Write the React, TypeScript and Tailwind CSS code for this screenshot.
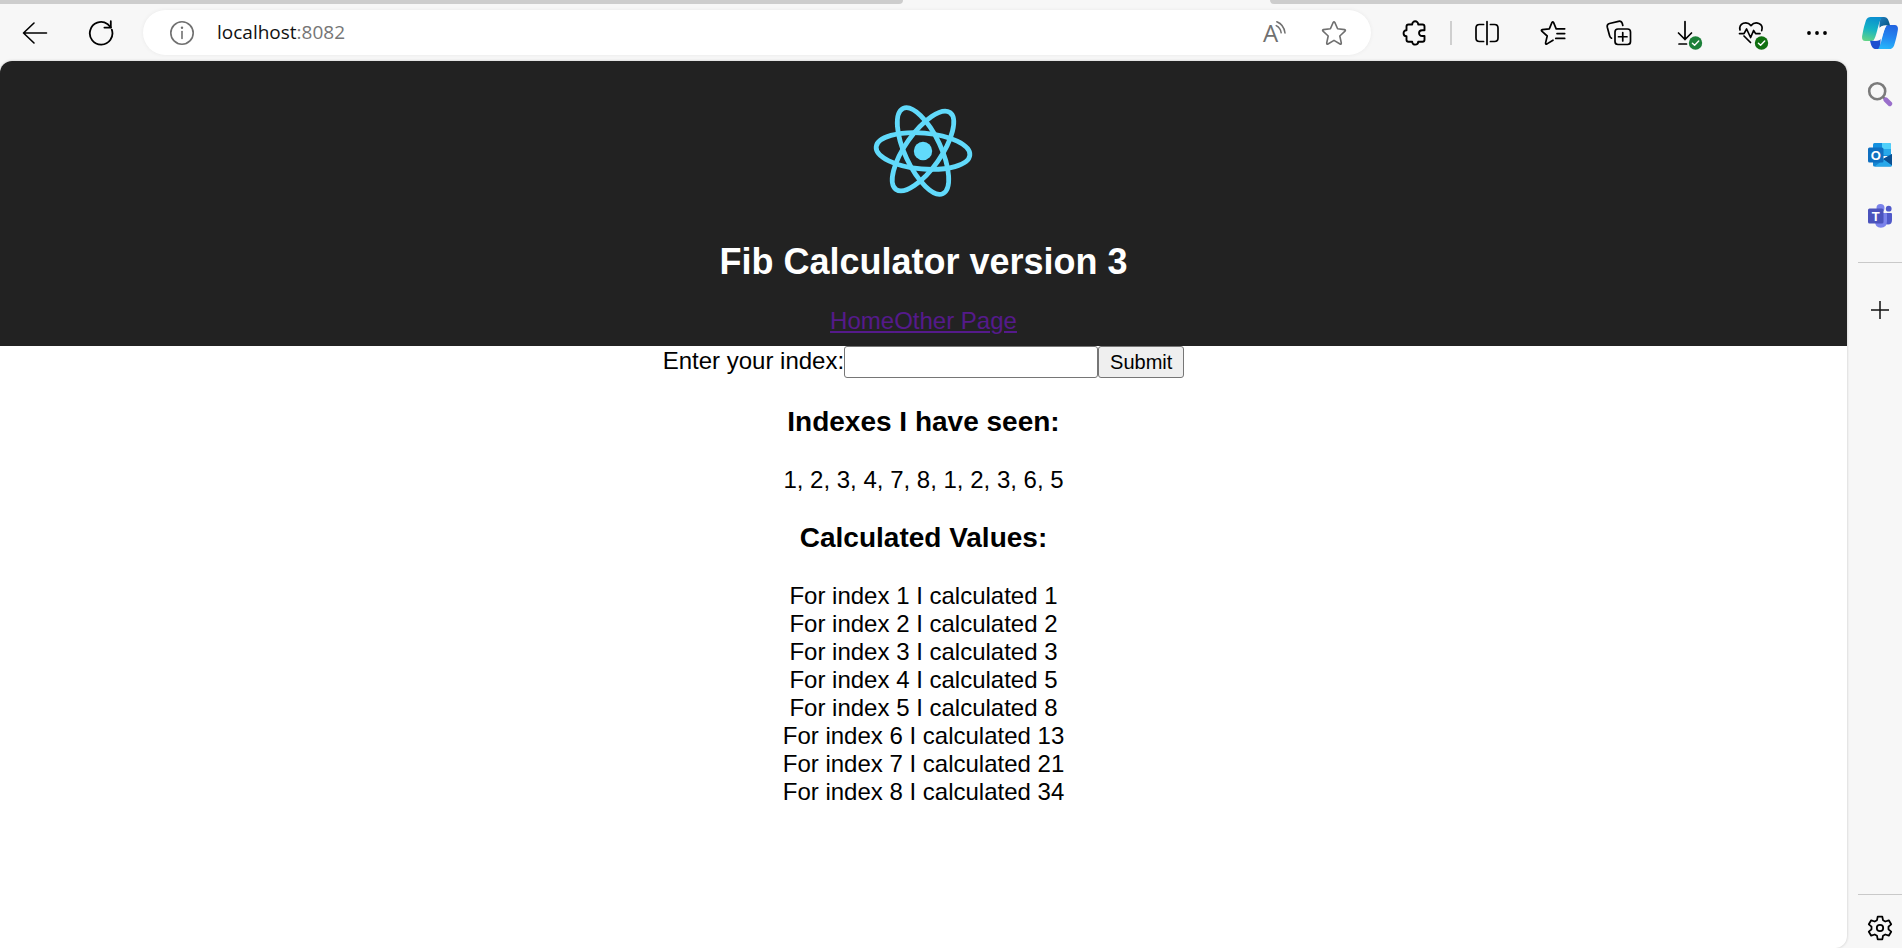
import { useState, type FormEvent, type ReactNode } from 'react';

const strokeProps = {
  fill: 'none',
  stroke: 'currentColor',
  strokeWidth: 1.6,
  strokeLinecap: 'round' as const,
  strokeLinejoin: 'round' as const,
};

function ToolButton({ label, children }: { label: string; children: ReactNode }) {
  return (
    <button type="button" aria-label={label} className="flex h-[57px] w-[66px] shrink-0 items-center justify-center text-black">
      {children}
    </button>
  );
}

function BackIcon() {
  return (
    <svg width="26" height="26" viewBox="0 0 26 26" {...strokeProps}>
      <path d="M1.5 13H24.5M12 3 1.5 13 12 23" />
    </svg>
  );
}

function ReloadIcon() {
  return (
    <svg width="26" height="26" viewBox="0 0 26 26" {...strokeProps} strokeWidth={1.8}>
      <path d="M23.8 9.6A11.3 11.3 0 1 1 19.4 3.9L22.8 7.4" />
      <path d="M22.8 1.2V7.6H16.4" />
    </svg>
  );
}

function InfoIcon() {
  return (
    <svg width="26" height="26" viewBox="0 0 26 26" {...strokeProps}>
      <circle cx="13" cy="13" r="11.2" />
      <path d="M13 11.5V18.5" />
      <circle cx="13" cy="7.8" r="1.2" fill="currentColor" stroke="none" />
    </svg>
  );
}

function ReadAloudIcon() {
  return (
    <svg width="26" height="26" viewBox="0 0 26 26" overflow="visible" {...strokeProps} strokeWidth={1.5}>
      <text x="2" y="22" fill="currentColor" stroke="none" className="font-['Open_Sans',sans-serif] text-[24px] leading-6">A</text>
      <path d="M15.200 5.600C18 7 19.800 9.600 20.200 12.800" />
      <path d="M15.800 1.800C20.400 3.600 23.400 7.800 24 13" />
    </svg>
  );
}

function StarIcon() {
  return (
    <svg width="26" height="26" viewBox="0 0 26 26" {...strokeProps}>
      <path d="M12.200 2.400Q13 1.200 13.800 2.400L16.600 8.800 23.600 9.600Q25 10 24 11.200L18.800 16 20.300 23Q20.400 24.600 19 24L13 20.400 7 24Q5.600 24.600 5.700 23L7.200 16 2 11.200Q1 10 2.400 9.600L9.400 8.800Z" />
    </svg>
  );
}

function PuzzleIcon() {
  return (
    <svg width="26" height="26" viewBox="0 0 26 26" {...strokeProps} strokeWidth={1.9}>
      <path d="M6.500 4.500H10.200C10.200 0.200 16.200 0.200 16.200 4.500H20.500Q22.500 4.500 22.500 6.500V10.200H20.200C16 10.200 16 16 20.200 16H22.500V19.800Q22.500 21.800 20.500 21.800H16.200C16.200 25.600 10.200 25.600 10.200 21.800H6.500Q4.500 21.800 4.500 19.800V16.200C0.600 16.200 0.600 10.200 4.500 10.200V6.500Q4.500 4.500 6.500 4.500Z" />
    </svg>
  );
}

function SplitIcon() {
  return (
    <svg width="26" height="26" viewBox="0 0 26 26" {...strokeProps} strokeWidth={1.700}>
      <path d="M13 1.500V24.500M9.600 4.500H5.500Q2 4.500 2 8V18Q2 21.500 5.500 21.500H9.600M16.400 4.500H20.500Q24 4.500 24 8V18Q24 21.500 20.500 21.500H16.400" />
    </svg>
  );
}

function FavoritesIcon() {
  return (
    <svg width="26" height="26" viewBox="0 0 26 26" {...strokeProps} strokeWidth={1.700}>
      <path d="M13 20.200 7 23.900Q5.400 24.600 5.600 22.900L7.200 16 1.800 11.200Q0.800 9.900 2.300 9.600L9.300 8.800 12 2.400Q12.800 1.200 13.500 2.400L16.200 8.800H24.700M17 13.600H24.700M15.800 18.400H24.700" />
    </svg>
  );
}

function CollectionsIcon() {
  return (
    <svg width="26" height="26" viewBox="0 0 26 26" {...strokeProps} strokeWidth={1.700}>
      <rect x="9" y="9" width="15.500" height="15.500" rx="3" />
      <path d="M16.750 12.500V21M12.500 16.750H21" />
      <path d="M5.500 18.200C4.300 17.700 3.900 16.900 3.600 15.800L1.300 7.200C.9 5.300 1.600 4 3.500 3.500L12.500 1.300C14.500 .9 15.700 1.600 16.300 3.500L16.800 5.500" />
    </svg>
  );
}

function StatusBadge({ fill }: { fill: string }) {
  return (
    <g stroke="none">
      <circle cx="23.500" cy="23" r="6.700" fill={fill} />
      <path d="M20.400 23.200 22.600 25.300 26.700 21" fill="none" stroke="#fff" strokeWidth="1.400" />
    </g>
  );
}

function DownloadIcon() {
  return (
    <svg width="26" height="26" viewBox="0 0 26 26" overflow="visible" {...strokeProps} strokeWidth={1.700}>
      <path d="M13 1.500V19.500M6.500 13 13 19.500 19.500 13M7 24H14.500" />
      <StatusBadge fill="#1c8039" />
    </svg>
  );
}

function HealthIcon() {
  return (
    <svg width="26" height="26" viewBox="0 0 26 26" overflow="visible" {...strokeProps} strokeWidth={1.700}>
      <path d="M2 10C.6 3.500 8.500.2 13 5.600 17.500.2 26 3.500 23.700 10.600M6 16 12.500 22.500M1.500 13.600H6L8.600 9 12.600 17.500 15.600 10.500 17.600 13.600H22" />
      <StatusBadge fill="#107010" />
    </svg>
  );
}

function MoreIcon() {
  return (
    <svg width="26" height="26" viewBox="0 0 26 26" fill="currentColor">
      <circle cx="5" cy="13" r="1.900" />
      <circle cx="13" cy="13" r="1.900" />
      <circle cx="21" cy="13" r="1.900" />
    </svg>
  );
}

function CopilotIcon() {
  return (
    <svg width="36" height="32" viewBox="0 0 108 96">
      <defs>
        <linearGradient id="copilot-left" x1="0.500" y1="0" x2="0.300" y2="1">
          <stop offset="0" stopColor="#0a8fd0" />
          <stop offset="0.500" stopColor="#14b3c4" />
          <stop offset="1" stopColor="#62d488" />
        </linearGradient>
        <linearGradient id="copilot-right" x1="0.700" y1="0" x2="0.500" y2="1">
          <stop offset="0" stopColor="#2364e0" />
          <stop offset="0.500" stopColor="#2385f0" />
          <stop offset="1" stopColor="#27b5fa" />
        </linearGradient>
        <linearGradient id="copilot-fold" x1="0" y1="0" x2="1" y2="1">
          <stop offset="0" stopColor="#1e7fc0" />
          <stop offset="1" stopColor="#064d78" />
        </linearGradient>
      </defs>
      <path d="M82 96H40C50 96 54 86 58 72 64 50 66 40 71 30 73 25 77 24 82 24H98C108 24 109 34 107 42 104 60 100 74 96 86 93 93 88 96 82 96Z" fill="url(#copilot-right)" />
      <path d="M26 0H68C58 0 54 10 50 24 44 46 42 56 37 66 35 71 31 72 26 72H10C0 72-1 62 1 54 4 36 8 22 12 10 15 3 20 0 26 0Z" fill="url(#copilot-left)" />
      <path d="M60 0H66C76 0 80 8 84 25H70C62 25 58 28 54 36 50 24 54 4 60 0Z" fill="url(#copilot-fold)" />
      <path d="M48 96H42C32 96 28 88 24 71H38C46 71 50 68 54 60 58 72 54 92 48 96Z" fill="#1c4fd0" />
      <path d="M63 27H73C69 30 67 40 63 50 59 63 56 70 46 71H35C41 66 44 56 48 44 51 34 54 27 63 27Z" fill="#fafafa" />
    </svg>
  );
}

function SearchIcon() {
  return (
    <svg width="26" height="26" viewBox="0 0 26 26" fill="none">
      <circle cx="10.200" cy="10.200" r="8" stroke="#7b7b7b" strokeWidth="2.600" />
      <path d="M16 16 19 19" stroke="#777" strokeWidth="2.400" />
      <path d="M18.800 18.800 22.800 22.800" stroke="#9a6fcb" strokeWidth="4.800" strokeLinecap="round" />
    </svg>
  );
}

function OutlookIcon() {
  return (
    <svg width="26" height="26" viewBox="0 0 26 26">
      <rect x="6" y="1" width="18" height="13" rx="1.500" fill="#1490df" />
      <path d="M15 1H22.500Q24 1 24 2.500V7H15Z" fill="#50d0fa" />
      <path d="M15 7H24V13H15Z" fill="#28a8ea" />
      <path d="M6 12 16 17 25 12V23Q25 24.500 23.500 24.500H7.500Q6 24.500 6 23Z" fill="#1585d2" />
      <path d="M25 12V23.500L16 17Z" fill="#0a4f91" />
      <path d="M16 17 25 23.500Q24.500 24.500 23.500 24.500H7.500L15 19Z" fill="#28a8ea" />
      <rect x="1" y="5.500" width="15.500" height="15" rx="1.500" fill="#0f6fc0" />
      <text x="8.750" y="17.500" textAnchor="middle" fill="#fff" className="font-['Liberation_Sans',sans-serif] text-[13px] font-bold">O</text>
    </svg>
  );
}

function TeamsIcon() {
  return (
    <svg width="26" height="26" viewBox="0 0 26 26">
      <circle cx="21.700" cy="5.700" r="2.900" fill="#5059c9" />
      <path d="M16 10H24Q25 10 25 11V17Q25 21.500 21 21.500 16 21.500 16 17Z" fill="#5059c9" />
      <circle cx="13.500" cy="5" r="4" fill="#7b83eb" />
      <path d="M8 10H19Q20 10 20 11V18Q20 24.800 13.800 24.800 8 24.800 8 18Z" fill="#7b83eb" />
      <rect x="1" y="5.500" width="15.500" height="15" rx="1.500" fill="#4b53bc" />
      <text x="8.750" y="17.500" textAnchor="middle" fill="#fff" className="font-['Liberation_Sans',sans-serif] text-[13px] font-bold">T</text>
    </svg>
  );
}

function PlusIcon() {
  return (
    <svg width="20" height="20" viewBox="0 0 20 20" stroke="#111" strokeWidth="1.500">
      <path d="M10 1V19M1 10H19" />
    </svg>
  );
}

function GearIcon() {
  return (
    <svg width="26" height="26" viewBox="0 0 26 26" {...strokeProps} strokeWidth={1.800}>
      <circle cx="13" cy="13" r="3.200" />
      <path d="M10.700 1.600H15.300L16 5.200 18.300 6.500 21.800 5.300 24.200 9.300 21.500 11.700V14.300L24.200 16.700 21.800 20.700 18.300 19.500 16 20.800 15.300 24.400H10.700L10 20.800 7.700 19.500 4.200 20.700 1.800 16.700 4.500 14.300V11.700L1.800 9.300 4.200 5.300 7.700 6.500 10 5.200Z" />
    </svg>
  );
}

function ReactLogo() {
  return (
    <svg viewBox="-59 -60 120 120" className="h-[120px] w-[120px]" role="img" aria-label="logo">
      <circle r="9.200" fill="#61dafb" />
      <g fill="none" stroke="#61dafb" strokeWidth="4.800" transform="rotate(5)">
        <ellipse rx="47" ry="18" />
        <ellipse rx="47" ry="18" transform="rotate(60)" />
        <ellipse rx="47" ry="18" transform="rotate(120)" />
      </g>
    </svg>
  );
}

function TabStrip() {
  return (
    <div className="flex h-1">
      <div className="flex-[903] rounded-br-sm bg-[#cdcdcd]" />
      <div className="flex-[367]" />
      <div className="flex-[632] rounded-bl-sm bg-[#cdcdcd]" />
    </div>
  );
}

function Toolbar() {
  return (
    <div className="flex h-[57px] items-center pl-0.5">
      <ToolButton label="Back"><BackIcon /></ToolButton>
      <ToolButton label="Refresh"><ReloadIcon /></ToolButton>
      <div className="mr-[11px] ml-[9px] flex h-[45px] flex-1 items-center rounded-full bg-white pl-[26px] text-[#707070] shadow-[0_0_4px_rgba(0,0,0,0.06)]">
        <InfoIcon />
        <p className="ml-[22px] flex-1 pb-0.5 font-['Open_Sans',sans-serif] text-[19px] leading-7 text-[#767676]">
          <span className="text-[#111]">localhost</span>:8082
        </p>
        <div className="flex items-center gap-[34px] pr-6">
          <button type="button" aria-label="Read aloud"><ReadAloudIcon /></button>
          <button type="button" aria-label="Add to favorites"><StarIcon /></button>
        </div>
      </div>
      <ToolButton label="Extensions"><PuzzleIcon /></ToolButton>
      <div className="mx-0.5 h-6 w-0.5 bg-[#cfcfcf]" />
      <ToolButton label="Split screen"><SplitIcon /></ToolButton>
      <ToolButton label="Favorites"><FavoritesIcon /></ToolButton>
      <ToolButton label="Collections"><CollectionsIcon /></ToolButton>
      <ToolButton label="Downloads"><DownloadIcon /></ToolButton>
      <ToolButton label="Browser essentials"><HealthIcon /></ToolButton>
      <ToolButton label="Settings and more"><MoreIcon /></ToolButton>
      <button type="button" aria-label="Copilot" className="ml-2 flex w-11 shrink-0 justify-center"><CopilotIcon /></button>
    </div>
  );
}

function SideButton({ label, children }: { label: string; children: ReactNode }) {
  return (
    <button type="button" aria-label={label} className="flex h-[61px] w-full shrink-0 items-center justify-center">
      {children}
    </button>
  );
}

function Sidebar() {
  return (
    <aside className="flex w-[55px] shrink-0 flex-col pt-0.5 pl-[11px]">
      <SideButton label="Search"><SearchIcon /></SideButton>
      <SideButton label="Outlook"><OutlookIcon /></SideButton>
      <SideButton label="Teams"><TeamsIcon /></SideButton>
      <hr className="my-4 border-[#c9c9c9]" />
      <SideButton label="Customize"><PlusIcon /></SideButton>
      <div className="mt-auto flex flex-col items-center">
        <hr className="w-full border-[#c9c9c9]" />
        <button type="button" aria-label="Settings" className="pt-5 pb-[7px]"><GearIcon /></button>
      </div>
    </aside>
  );
}

const seenIndexes = [1, 2, 3, 4, 7, 8, 1, 2, 3, 6, 5];
const calculated = [
  [1, 1],
  [2, 2],
  [3, 3],
  [4, 5],
  [5, 8],
  [6, 13],
  [7, 21],
  [8, 34],
];

function FibPage() {
  const [index, setIndex] = useState('');
  const submit = (event: FormEvent) => {
    event.preventDefault();
    setIndex('');
  };
  return (
    <main className="flex-1 overflow-hidden rounded-t-xl rounded-br-xl bg-white text-center font-['Liberation_Sans',Arial,sans-serif] text-2xl leading-7 text-black shadow-[0_0_3px_rgba(0,0,0,0.2)]">
      <header className="bg-[#222] pt-[30px] pb-[11px]">
        <div className="flex justify-center"><ReactLogo /></div>
        <h1 className="mt-[30px] text-4xl leading-[42px] font-bold text-white">Fib Calculator version 3</h1>
        <nav className="mt-6 text-[#551a8b] underline">
          <a href="#home">Home</a>
          <a href="#other">Other Page</a>
        </nav>
      </header>
      <form onSubmit={submit} className="flex justify-center">
        <label htmlFor="index" className="leading-[30px]">Enter your index:</label>
        <input
          id="index"
          value={index}
          onChange={(event) => setIndex(event.target.value)}
          className="h-8 w-[254px] rounded-[3px] border border-[#767676] bg-white px-1 text-xl"
        />
        <button type="submit" className="h-8 rounded-[3px] border border-[#767676] bg-[#efefef] px-[11px] text-xl">Submit</button>
      </form>
      <h3 className="my-7 text-[28px] leading-8 font-bold">Indexes I have seen:</h3>
      <p>{seenIndexes.join(', ')}</p>
      <h3 className="my-7 text-[28px] leading-8 font-bold">Calculated Values:</h3>
      {calculated.map(([key, value]) => (
        <div key={key}>{`For index ${key} I calculated ${value}`}</div>
      ))}
    </main>
  );
}

export default function App() {
  return (
    <div className="flex min-h-screen flex-col bg-[#f7f7f7]">
      <TabStrip />
      <Toolbar />
      <div className="flex flex-1">
        <FibPage />
        <Sidebar />
      </div>
    </div>
  );
}
